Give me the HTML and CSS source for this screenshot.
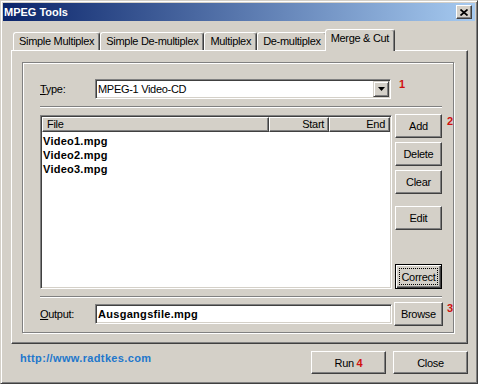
FILE: index.html
```html
<!DOCTYPE html>
<html lang="en">
<head>
  <meta charset="UTF-8" />
  <title>MPEG Tools</title>
  <link rel="stylesheet" href="styles.css">
</head>
<body>

  <div class="window">
    <div class="titlebar">
      <span class="title">MPEG Tools</span>
      <button class="close-btn">
        <svg width="8" height="7" viewBox="0 0 8 7"><path d="M0.5 0.5 L7.5 6.5 M7.5 0.5 L0.5 6.5" stroke="#000" stroke-width="1.7" fill="none"/></svg>
      </button>
    </div>

    <div class="tabs">
      <div class="tab">Simple Multiplex</div>
      <div class="tab">Simple De-multiplex</div>
      <div class="tab">Multiplex</div>
      <div class="tab">De-multiplex</div>
      <div class="tab active">Merge &amp; Cut</div>
    </div>

    <div class="panel">
      <div class="group">
        <div class="row type-row">
          <label class="lbl"><u>T</u>ype:</label>
          <div class="combo">
            <span class="field-text">MPEG-1 Video-CD</span>
            <span class="combo-btn">
              <svg width="7" height="4" viewBox="0 0 7 4"><path d="M0 0 H7 L3.5 4 Z" fill="#000"/></svg>
            </span>
          </div>
          <span class="num">1</span>
        </div>

        <div class="sep"></div>

        <div class="main">
          <div class="list">
            <div class="list-head">
              <div class="col col-file">File</div>
              <div class="col col-start">Start</div>
              <div class="col col-end">End</div>
            </div>
            <div class="list-body">
              <div class="item">Video1.mpg</div>
              <div class="item">Video2.mpg</div>
              <div class="item">Video3.mpg</div>
            </div>
          </div>
          <div class="side">
            <button class="btn">Add</button>
            <button class="btn">Delete</button>
            <button class="btn">Clear</button>
            <button class="btn edit">Edit</button>
            <button class="btn default"><span class="focus">Correct</span></button>
          </div>
          <span class="num">2</span>
        </div>

        <div class="sep"></div>

        <div class="row out-row">
          <label class="lbl"><u>O</u>utput:</label>
          <div class="input"><span class="field-text bold">Ausgangsfile.mpg</span></div>
          <button class="btn browse">Browse</button>
          <span class="num">3</span>
        </div>
      </div>
    </div>

    <div class="footer">
      <a class="link" href="#">http://www.radtkes.com</a>
      <div class="actions">
        <button class="btn wide">Run <span class="num-inline">4</span></button>
        <button class="btn wide">Close</button>
      </div>
    </div>
  </div>

</body>
</html>
```

FILE: styles.css
```css
* {
  box-sizing: border-box;
}

body {
  margin: 0;
  background: #d4d0c8;
  font-family: 'Liberation Sans', Arial, sans-serif;
  font-size: 11px;
  color: #000;
}

.window {
  width: 478px;
  height: 384px;
  padding: 2px;
  border: 1px solid;
  border-color: #d4d0c8 #404040 #404040 #d4d0c8;
  box-shadow: inset 1px 1px #fff, inset -1px -1px #808080;
  display: flex;
  flex-direction: column;
}

/* title bar */
.titlebar {
  height: 18px;
  display: flex;
  align-items: center;
  justify-content: space-between;
  padding: 0 3px 0 1px;
  background: linear-gradient(to right, #0a246a, #a6caf0);
}

.title {
  color: #fff;
  font-weight: bold;
}

.close-btn {
  width: 16px;
  height: 14px;
  padding: 0;
  background: #d4d0c8;
  border: 1px solid;
  border-color: #fff #404040 #404040 #fff;
  box-shadow: inset -1px -1px #808080;
  display: flex;
  align-items: center;
  justify-content: center;
}

/* tabs */
.tabs {
  display: flex;
  align-items: flex-end;
  height: 21px;
  margin: 8px 0 0 8px;
  padding-left: 2px;
  position: relative;
  z-index: 1;
}

.tab {
  height: 18px;
  padding: 0 5px;
  line-height: 17px;
  letter-spacing: -0.3px;
  background: #d4d0c8;
  border: 1px solid;
  border-color: #fff #404040 #d4d0c8 #fff;
  border-bottom: none;
  border-radius: 3px 3px 0 0;
  box-shadow: inset -1px 0 #808080;
}

.tab.active {
  height: 22px;
  margin: 0 -2px -1px;
  position: relative;
}

/* panel */
.panel {
  flex: none;
  margin: 0 7px 0 8px;
  padding: 11px 13px 10px 10px;
  border: 1px solid;
  border-color: #fff #404040 #404040 #fff;
  box-shadow: inset -1px -1px #808080;
}

.group {
  border: 1px solid #808080;
  box-shadow: inset 1px 1px #fff, 1px 1px #fff;
  padding: 16px 0 6px 17px;
}

.row {
  display: flex;
  align-items: center;
}

.type-row {
  height: 20px;
}

.lbl {
  width: 55px;
  letter-spacing: -0.3px;
}

.combo,
.input {
  height: 20px;
  padding: 1px;
  background: #fff;
  border: 1px solid;
  border-color: #808080 #fff #fff #808080;
  box-shadow: inset 1px 1px #404040, inset -1px -1px #d4d0c8;
  display: flex;
  align-items: center;
}

.combo {
  width: 296px;
}

.input {
  width: 297px;
}

.field-text {
  padding-left: 1px;
  letter-spacing: -0.3px;
}

.field-text.bold {
  font-weight: bold;
  letter-spacing: 0.3px;
}

.combo-btn {
  margin-left: auto;
  width: 16px;
  height: 16px;
  background: #d4d0c8;
  border: 1px solid;
  border-color: #d4d0c8 #404040 #404040 #d4d0c8;
  box-shadow: inset 1px 1px #fff, inset -1px -1px #808080;
  display: flex;
  align-items: center;
  justify-content: center;
}

.num {
  align-self: flex-start;
  margin: -1px 0 0 8px;
  color: #d01010;
  font-weight: bold;
}

.sep {
  width: 402px;
  height: 2px;
  margin-top: 7px;
  border-top: 1px solid #808080;
  border-bottom: 1px solid #fff;
}

/* list + side buttons */
.main {
  display: flex;
  height: 175px;
  margin-top: 6px;
}

.list {
  width: 352px;
  height: 174px;
  margin-top: 1px;
  padding: 1px;
  background: #fff;
  border: 1px solid;
  border-color: #808080 #fff #fff #808080;
  box-shadow: inset 1px 1px #404040, inset -1px -1px #d4d0c8;
}

.list-head {
  display: flex;
  height: 15px;
}

.col {
  height: 15px;
  line-height: 13px;
  padding: 0 4px;
  letter-spacing: -0.3px;
  background: #d4d0c8;
  border: 1px solid;
  border-color: #fff #404040 #404040 #fff;
  box-shadow: inset -1px -1px #808080;
}

.col-file {
  width: 227px;
}

.col-start {
  width: 60px;
  text-align: right;
}

.col-end {
  width: 61px;
  text-align: right;
}

.list-body {
  padding: 2px 0 0 1px;
}

.item {
  line-height: 14px;
  font-weight: bold;
  letter-spacing: 0.25px;
}

.side {
  width: 48px;
  margin-left: 3px;
  display: flex;
  flex-direction: column;
  gap: 4px;
}

.btn {
  height: 24px;
  padding: 0;
  font-family: inherit;
  font-size: 11px;
  letter-spacing: -0.3px;
  color: #000;
  background: #d4d0c8;
  border: 1px solid;
  border-color: #fff #404040 #404040 #fff;
  box-shadow: inset -1px -1px #808080;
}

.btn.edit {
  margin-top: 8px;
}

.btn.default {
  height: 25px;
  margin-top: auto;
  padding: 3px;
  display: flex;
  border-color: #000;
  box-shadow: inset 1px 1px #fff, inset -1px -1px #404040, inset -2px -2px #808080;
}

.focus {
  flex: 1;
  display: flex;
  align-items: center;
  justify-content: center;
  border: 1px dotted #000;
}

.side + .num {
  margin: 1px 0 0 5px;
}

/* output row */
.out-row {
  height: 24px;
  margin-top: 4px;
}

.btn.browse {
  width: 49px;
  margin-left: 2px;
}

.out-row .num {
  margin: 0 0 0 4px;
}

/* footer */
.footer {
  display: flex;
  margin-top: 7px;
  padding: 0 7px 0 17px;
}

.link {
  margin-top: 1px;
  color: #2277cc;
  font-weight: bold;
  letter-spacing: 0.35px;
  text-decoration: none;
}

.actions {
  margin-left: auto;
  display: flex;
  gap: 7px;
}

.btn.wide {
  width: 75px;
  height: 23px;
}

.num-inline {
  color: #d01010;
  font-weight: bold;
}
```
